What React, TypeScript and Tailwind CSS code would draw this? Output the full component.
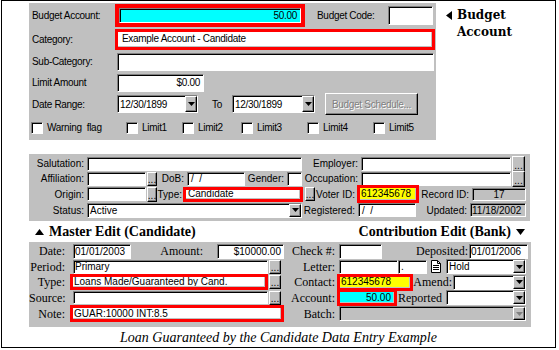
import React from 'react'

const sans = "font-['Liberation_Sans',Arial,sans-serif]"
const serif = "font-['Liberation_Serif','Times_New_Roman',serif]"
const sunkenCls =
  'border border-t-[#808080] border-l-[#808080] border-b-white border-r-white shadow-[inset_1px_1px_0_#000] flex items-center overflow-hidden whitespace-nowrap shrink-0'
const raisedCls =
  'bg-[#c0c0c0] border border-t-white border-l-white border-b-black border-r-black shadow-[inset_-1px_-1px_0_#808080] shrink-0'

function Field({ className = '', children }: { className?: string; children?: React.ReactNode }) {
  return <div className={`${sunkenCls} ${className}`}>{children}</div>
}

function RedBox({ className = '', inner = 'bg-white', children }: { className?: string; inner?: string; children?: React.ReactNode }) {
  return (
    <div className={`border-[3px] border-[#ff0000] flex shrink-0 ${className}`}>
      <div className={`w-full h-full flex items-center overflow-hidden whitespace-nowrap border-b border-r border-[#c0c0c0] ${inner}`}>{children}</div>
    </div>
  )
}

function Arrow({ disabled = false }: { disabled?: boolean }) {
  return (
    <div className={`${raisedCls} w-[12px] h-full flex items-center justify-center`}>
      <svg width="7" height="4" viewBox="0 0 7 4">
        <polygon points="0,0 7,0 3.5,4" fill={disabled ? '#808080' : '#000'} />
      </svg>
    </div>
  )
}

function Select({ className = '', text = '', disabled = false }: { className?: string; text?: string; disabled?: boolean }) {
  return (
    <Field className={`justify-between ${disabled ? 'bg-[#c0c0c0]' : 'bg-white'} ${className}`}>
      <span className="pl-[2px]">{text}</span>
      <Arrow disabled={disabled} />
    </Field>
  )
}

function Dots({ className = '' }: { className?: string }) {
  return (
    <div className={`${raisedCls} flex items-end justify-center leading-[8px] text-[10px] ${className}`}>
      <span className="pb-[1px]">...</span>
    </div>
  )
}

function Check({ label, className = '' }: { label: string; className?: string }) {
  return (
    <div className={`flex items-center gap-[4px] shrink-0 ${className}`}>
      <div className={`${sunkenCls} w-[12px] h-[12px] bg-white`} />
      <span>{label}</span>
    </div>
  )
}

function Header({ text, side }: { text: string; side: 'up' | 'down' }) {
  return (
    <div className={`flex items-center gap-[5px] font-bold text-[14px] ${serif}`}>
      {side === 'up' && (
        <svg width="9" height="6" viewBox="0 0 9 6">
          <polygon points="0,6 9,6 4.5,0" fill="#000" />
        </svg>
      )}
      <span>{text}</span>
      {side === 'down' && (
        <svg width="9" height="6" viewBox="0 0 9 6">
          <polygon points="0,0 9,0 4.5,6" fill="#000" />
        </svg>
      )}
    </div>
  )
}

function TopPanel() {
  return (
    <div className={`w-[407px] h-[137px] bg-[#c0c0c0] text-[10px] tracking-[-0.3px] ${sans} flex flex-col`}>
      <div className="h-[24px] flex items-center pl-[3px]">
        <span className="w-[83px]">Budget Account:</span>
        <div className="w-[190px] h-[23px] border-4 border-[#ff0000] flex">
          <Field className="w-full h-full bg-[#00ffff] justify-end pr-[3px]">50.00</Field>
        </div>
        <span className="ml-[12px] w-[71px]">Budget Code:</span>
        <Field className="w-[45px] h-[19px] bg-white" />
      </div>
      <div className="h-[24px] flex items-center pl-[3px]">
        <span className="w-[83px]">Category:</span>
        <RedBox className="w-[320px] h-[21px]">
          <span className="pl-[4px]">Example Account - Candidate</span>
        </RedBox>
      </div>
      <div className="h-[21px] flex items-center pl-[3px]">
        <span className="w-[85px]">Sub-Category:</span>
        <Field className="w-[317px] h-[18px] bg-white" />
      </div>
      <div className="h-[21px] flex items-center pl-[3px]">
        <span className="w-[85px]">Limit Amount</span>
        <Field className="w-[87px] h-[18px] bg-white justify-end pr-[3px]">$0.00</Field>
      </div>
      <div className="h-[22px] flex items-center pl-[3px]">
        <span className="w-[85px]">Date Range:</span>
        <Select className="w-[81px] h-[18px]" text="12/30/1899" />
        <span className="ml-[14px] w-[20px]">To</span>
        <Select className="w-[83px] h-[18px]" text="12/30/1899" />
        <div className={`${raisedCls} ml-[10px] w-[93px] h-[22px] flex items-center justify-center text-[#808080] [text-shadow:1px_1px_0_#fff]`}>
          Budget Schedule...
        </div>
      </div>
      <div className="h-[25px] flex items-center pl-[2px]">
        <Check label="Warning  flag" className="w-[95px] whitespace-pre" />
        <Check label="Limit1" className="w-[56px]" />
        <Check label="Limit2" className="w-[59px]" />
        <Check label="Limit3" className="w-[66px]" />
        <Check label="Limit4" className="w-[66px]" />
        <Check label="Limit5" />
      </div>
    </div>
  )
}

function MiddlePanel() {
  const lab = 'text-right shrink-0 pr-[1px]'
  return (
    <div className={`w-[501px] h-[67px] bg-[#c0c0c0] text-[10px] pt-[2px] ${sans} flex flex-col`}>
      <div className="h-[15px] flex items-center">
        <span className={`w-[56px] ${lab}`}>Salutation:</span>
        <Field className="ml-[2px] w-[215px] h-[14px] bg-white" />
        <span className={`w-[57px] ${lab}`}>Employer:</span>
        <Field className="ml-[2px] w-[150px] h-[14px] bg-white" />
        <Dots className="ml-[1px] w-[13px] h-[16px]" />
      </div>
      <div className="h-[15px] flex items-center">
        <span className={`w-[56px] ${lab}`}>Affiliation:</span>
        <Field className="ml-[2px] w-[59px] h-[14px] bg-white" />
        <Dots className="ml-[1px] w-[10px] h-[14px]" />
        <span className={`w-[28px] ${lab}`}>DoB:</span>
        <Field className="ml-[2px] w-[58px] h-[14px] bg-white whitespace-pre">
          <span className="pl-[3px]">/  /</span>
        </Field>
        <span className={`w-[40px] ${lab}`}>Gender:</span>
        <Field className="ml-[2px] w-[15px] h-[14px] bg-white" />
        <span className={`w-[57px] ${lab}`}>Occupation:</span>
        <Field className="ml-[2px] w-[150px] h-[14px] bg-white" />
        <Dots className="ml-[1px] w-[13px] h-[16px]" />
      </div>
      <div className="h-[16px] flex items-center">
        <span className={`w-[56px] ${lab}`}>Origin:</span>
        <Field className="ml-[2px] w-[59px] h-[14px] bg-white" />
        <Dots className="ml-[1px] w-[10px] h-[15px]" />
        <span className={`w-[26px] ${lab}`}>Type:</span>
        <RedBox className="w-[120px] h-[15px]">
          <span className="pl-[2px]">Candidate</span>
        </RedBox>
        <Dots className="ml-[2px] w-[10px] h-[14px]" />
        <span className={`w-[41px] ${lab}`}>Voter ID:</span>
        <RedBox className="ml-[1px] w-[62px] h-[18px]" inner="bg-[#ffff00]">
          <span className="pl-[1px]">612345678</span>
        </RedBox>
        <span className={`w-[51px] ${lab}`}>Record ID:</span>
        <Field className="ml-[2px] w-[54px] h-[13px] bg-[#c0c0c0] justify-center">17</Field>
      </div>
      <div className="h-[16px] flex items-center">
        <span className={`w-[56px] ${lab}`}>Status:</span>
        <Select className="ml-[2px] w-[215px] h-[15px]" text="Active" />
        <span className={`w-[54px] ${lab}`}>Registered:</span>
        <Field className="ml-[2px] w-[58px] h-[14px] bg-white whitespace-pre">
          <span className="pl-[3px]">/  /</span>
        </Field>
        <span className={`w-[52px] ${lab}`}>Updated:</span>
        <Field className="ml-[2px] w-[56px] h-[14px] bg-[#c0c0c0] pl-[1px]">11/18/2002</Field>
      </div>
    </div>
  )
}

function DocIcon() {
  return (
    <div className="ml-[2px] w-[14px] h-[15px] flex items-center justify-center shrink-0">
      <svg width="10" height="13" viewBox="0 0 10 13">
        <path d="M0.5 0.5 H6.5 L9.5 3.5 V12.5 H0.5 Z" fill="#fff" stroke="#000" />
        <path d="M6.5 0.5 V3.5 H9.5" fill="none" stroke="#000" />
        <path d="M2 5.5 H8 M2 7.5 H8 M2 9.5 H8" stroke="#000" />
      </svg>
    </div>
  )
}

function BottomPanel() {
  const lab = `text-right shrink-0 text-[12px] ${serif}`
  return (
    <div className={`w-[502px] h-[85px] bg-[#c0c0c0] text-[10px] pt-[1px] ${sans} flex flex-col`}>
      <div className="h-[16px] flex items-center">
        <span className={`w-[41px] pr-[5px] ${lab}`}>Date:</span>
        <Field className="ml-[3px] w-[58px] h-[15px] bg-white pl-[1px]">01/01/2003</Field>
        <span className={`w-[82px] pr-[10px] ${lab}`}>Amount:</span>
        <Field className="ml-[4px] w-[67px] h-[15px] bg-white justify-end pr-[2px]">$10000.00</Field>
        <span className={`w-[53px] pr-[2px] ${lab}`}>Check #:</span>
        <Field className="ml-[2px] w-[43px] h-[15px] bg-white" />
        <span className={`w-[87px] pr-[1px] ${lab}`}>Deposited:</span>
        <Field className="w-[59px] h-[15px] bg-white pl-[1px]">01/01/2006</Field>
      </div>
      <div className="h-[15px] flex items-center">
        <span className={`w-[41px] pr-[5px] ${lab}`}>Period:</span>
        <Field className="ml-[3px] w-[195px] h-[14px] bg-white pl-[1px]">Primary</Field>
        <Dots className="ml-[1px] w-[12px] h-[14px]" />
        <span className={`w-[56px] pr-[2px] ${lab}`}>Letter:</span>
        <Field className="ml-[2px] w-[59px] h-[14px] bg-white" />
        <Field className="w-[29px] h-[14px] bg-white pl-[2px]">.</Field>
        <DocIcon />
        <Select className="ml-[3px] w-[80px] h-[15px]" text="Hold" />
      </div>
      <div className="h-[16px] flex items-center">
        <span className={`w-[41px] pr-[5px] ${lab}`}>Type:</span>
        <RedBox className="w-[198px] h-[16px]">
          <span className="pl-[1px]">Loans Made/Guaranteed by Cand.</span>
        </RedBox>
        <Dots className="ml-[1px] w-[12px] h-[14px]" />
        <span className={`w-[56px] pr-[2px] ${lab}`}>Contact:</span>
        <RedBox className="w-[76px] h-[17px]" inner="bg-[#ffff00]">
          <span className="pl-[1px]">612345678</span>
        </RedBox>
        <span className={`w-[40px] pr-[1px] ${lab}`}>Amend:</span>
        <Select className="w-[73px] h-[15px]" />
      </div>
      <div className="h-[15px] flex items-center">
        <span className={`w-[41px] pr-[5px] ${lab}`}>Source:</span>
        <Field className="ml-[3px] w-[195px] h-[13px] bg-white" />
        <Dots className="ml-[1px] w-[12px] h-[14px]" />
        <span className={`w-[56px] pr-[2px] ${lab}`}>Account:</span>
        <RedBox className="w-[60px] h-[17px]" inner="bg-[#00ffff] justify-end">
          <span className="pr-[2px]">50.00</span>
        </RedBox>
        <span className={`w-[49px] pl-[1px] text-left! ${lab}`}>Reported</span>
        <Select className="w-[80px] h-[15px]" />
      </div>
      <div className="h-[17px] flex items-center">
        <span className={`w-[41px] pr-[5px] ${lab}`}>Note:</span>
        <RedBox className="w-[214px] h-[17px]">
          <span className="pl-[1px]">GUAR:10000 INT:8.5</span>
        </RedBox>
        <span className={`w-[53px] pr-[2px] ${lab}`}>Batch:</span>
        <Select className="ml-[2px] w-[187px] h-[15px]" disabled />
      </div>
    </div>
  )
}

export default function App() {
  return (
    <div className="w-[559px] h-[350px] bg-white text-black overflow-hidden">
      <div className="ml-[1px] w-[555px] h-[348px] border border-black flex flex-col">
        <div className="flex mt-[2px] ml-[27px]">
          <TopPanel />
          <div className={`ml-[10px] mt-[4px] flex gap-[5px] font-bold text-[13px] leading-[17px] ${serif}`}>
            <svg width="6" height="9" viewBox="0 0 6 9" className="mt-[4px]">
              <polygon points="6,0 6,9 0,4.5" fill="#000" />
            </svg>
            <div className="font-['DejaVu_Serif',serif] text-[12px]">
              <div>Budget</div>
              <div>Account</div>
            </div>
          </div>
        </div>
        <div className="mt-[14px] ml-[27px]">
          <MiddlePanel />
        </div>
        <div className="h-[26px] w-[523px] flex items-center justify-between pl-[33px]">
          <Header text="Master Edit (Candidate)" side="up" />
          <Header text="Contribution Edit (Bank)" side="down" />
        </div>
        <div className="ml-[27px]">
          <BottomPanel />
        </div>
        <div className={`flex-1 flex items-center justify-center italic text-[14px] ${serif}`}>
          Loan Guaranteed by the Candidate Data Entry Example
        </div>
      </div>
    </div>
  )
}
